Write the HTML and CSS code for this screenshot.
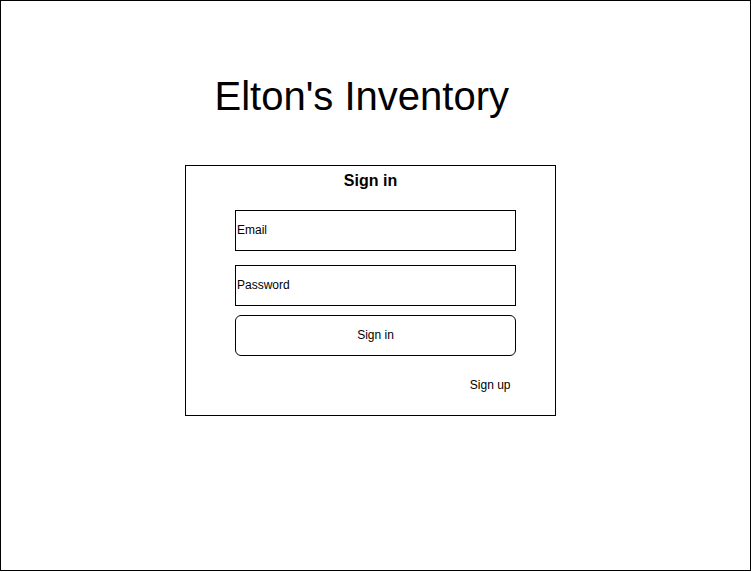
FILE: index.html
```html
<!DOCTYPE html>
<html>
<head>
<meta charset="utf-8">
<title>Elton's Inventory</title>
<link rel="stylesheet" href="styles.css">
</head>
<body>
<div class="frame">
  <h1 class="title">Elton's Inventory</h1>
  <div class="card">
    <h2 class="card-title">Sign in</h2>
    <div class="form">
      <div class="field">Email</div>
      <div class="field field-gap">Password</div>
      <div class="button">Sign in</div>
      <div class="signup">Sign up</div>
    </div>
  </div>
</div>
</body>
</html>
```
FILE: styles.css
```css
html, body {
  margin: 0;
  padding: 0;
  background: #fff;
}
body {
  font-family: "Liberation Sans", Arial, sans-serif;
  color: #000;
}
.frame {
  width: 751px;
  height: 571px;
  border: 1px solid #000;
  box-sizing: border-box;
  padding-top: 75px;
}
.title {
  margin: 0 0 0 213.5px;
  font-size: 40px;
  line-height: 40px;
  font-weight: normal;
  white-space: nowrap;
}
.card {
  margin: 49px 0 0 184px;
  width: 371px;
  height: 251px;
  border: 1px solid #000;
  box-sizing: border-box;
  padding-top: 7px;
}
.card-title {
  margin: 0;
  font-size: 16px;
  line-height: 16px;
  font-weight: bold;
  text-align: center;
}
.form {
  margin: 21px 0 0 49px;
  width: 281px;
  display: flex;
  flex-direction: column;
}
.field {
  height: 41px;
  border: 1px solid #000;
  box-sizing: border-box;
  display: flex;
  align-items: center;
  padding: 0 0 2px 1px;
  font-size: 12px;
}
.field-gap {
  margin-top: 14px;
}
.button {
  margin-top: 9px;
  height: 41px;
  border: 1px solid #000;
  border-radius: 6px;
  box-sizing: border-box;
  display: flex;
  align-items: center;
  justify-content: center;
  padding-bottom: 2px;
  font-size: 12px;
}
.signup {
  margin-top: 22px;
  align-self: flex-end;
  margin-right: 5.5px;
  font-size: 12px;
  line-height: 14px;
}
```
